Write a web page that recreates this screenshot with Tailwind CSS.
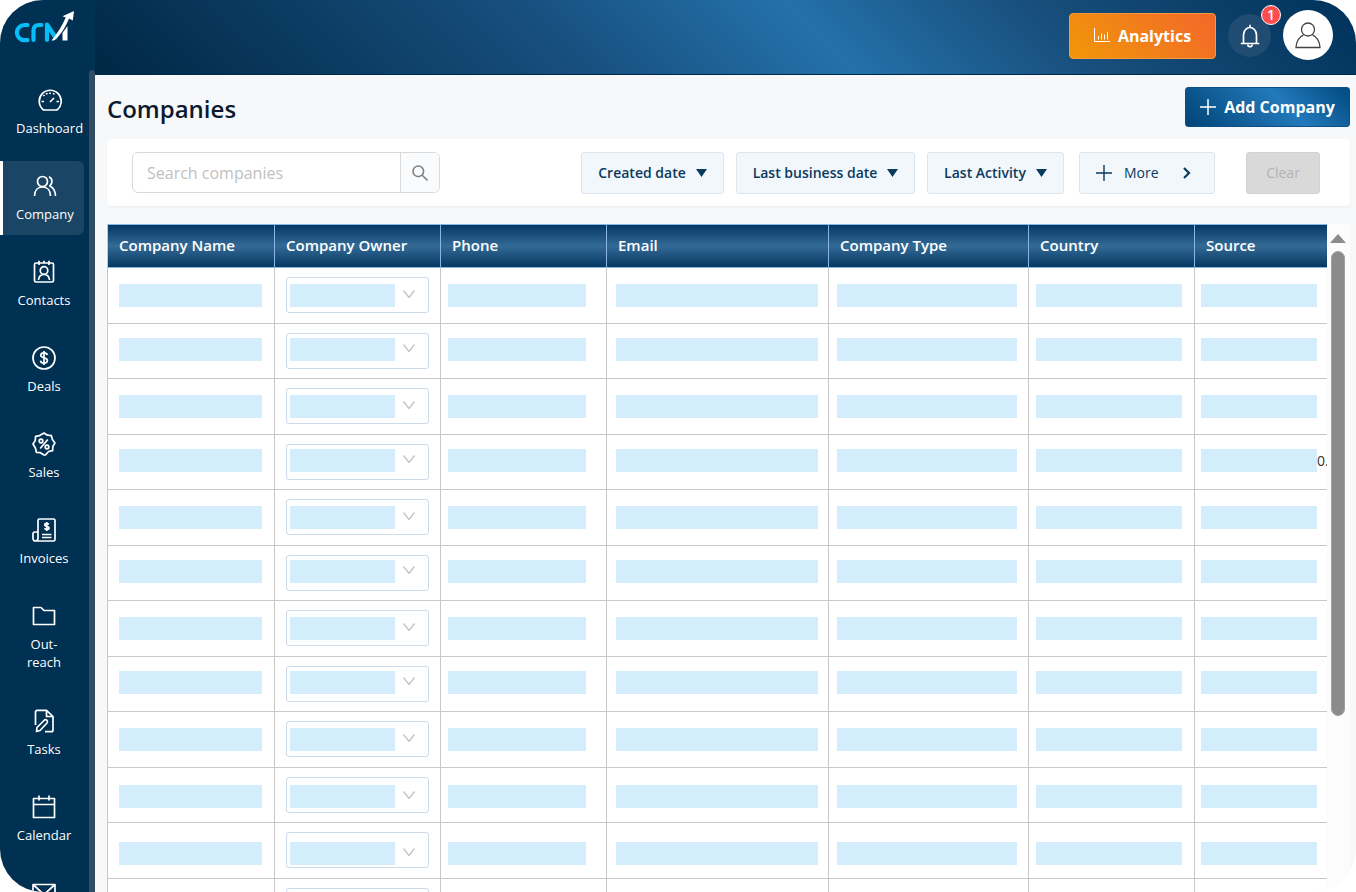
<!DOCTYPE html>
<html lang="en">
<head>
    <meta charset="UTF-8">
    <meta name="viewport" content="width=device-width, initial-scale=1.0">
    <title>CRM - Companies</title>
    <script src="https://cdn.jsdelivr.net/npm/@tailwindcss/browser@4"></script>
</head>
<body class="bg-white font-['Open_Sans','Noto_Sans',sans-serif]">
<div class="flex h-screen overflow-hidden rounded-[43px] bg-[#f7f8fa]">

    <!-- Sidebar -->
    <aside class="flex w-[95px] shrink-0 flex-col bg-[#003052]">
        <a href="#" aria-label="CRM home" class="block h-[70px] shrink-0 pt-2 pl-3">
            <svg class="h-9 w-16" viewBox="0 0 64 36" fill="none">
                <g stroke="#06bdf8" stroke-width="4.200" stroke-linecap="round" stroke-linejoin="round">
                    <path d="M15.500 17h-3a7.600 7.600 0 0 0 0 15.200h3"/>
                    <path d="M21.500 32V22.500c0-3.500 2-5.500 5.500-5.500h2.500"/>
                    <path d="M35 32V16.500l8.500 13"/>
                </g>
                <path d="M42 32.500 C49 27 53.500 19 57 10.500l3.800 2L62 3l-11.500 5.300 3.200 1.200C50 18 45.500 25 39.500 32.500z" fill="#fff"/>
                <path d="M55.500 18v14.500h-5V25z" fill="#fff"/>
            </svg>
        </a>
        <div class="flex min-h-0 flex-1 overflow-hidden">
            <nav id="nav" class="flex w-[84px] flex-col gap-3 pt-[5px] text-center text-[13px] leading-[18px] font-medium text-white"></nav>
            <div class="ml-auto w-[6px] shrink-0 rounded-t-full bg-[#304c63]"></div>
        </div>
    </aside>

    <div class="flex min-w-0 flex-1 flex-col">
        <!-- Top bar -->
        <header class="flex h-[75px] shrink-0 items-start justify-end gap-3 border-b border-[#002a4c] bg-[linear-gradient(45deg,#002744_0%,#174f7e_37%,#2471aa_57%,#184f7c_75%,#00325a_100%)] pt-[10px] pr-[23px]">
            <button type="button" class="mt-[3px] flex h-[46px] w-[147px] items-center justify-center gap-2 rounded border border-[#f79a3c] bg-[linear-gradient(45deg,#f09708,#f3672a)] text-base font-bold text-white">
                <svg class="size-4" viewBox="0 0 16 16" fill="none" stroke="currentColor" stroke-width="1"><path d="M.5 0v13.500h15.500M4.500 11.500V8M7.500 11.500V5.500M10.500 11.500V6.500M13.500 11.500V4"/></svg>
                Analytics
            </button>
            <button type="button" aria-label="Notifications" class="relative mt-1 flex size-[43px] items-center justify-center rounded-full bg-[#204c71] text-white">
                <svg class="h-6 w-5" viewBox="0 0 20 24" fill="none" stroke="currentColor" stroke-width="1.700"><path d="M3.500 19.500V11a6.500 7.500 0 0 1 13 0v8.500M.8 19.500h18.400M10 3.500V.8"/><path d="M7.800 20.500a2.200 2.200 0 0 0 4.400 0"/></svg>
                <span class="absolute -top-[9px] -right-[10px] flex size-5 items-center justify-center rounded-full border border-white bg-[#ff4d4f] text-sm font-semibold">1</span>
            </button>
            <button type="button" aria-label="Account" class="flex size-[50px] items-center justify-center rounded-full bg-white text-[#444]">
                <svg class="h-[27px] w-[26px]" viewBox="0 0 26 27" fill="none" stroke="currentColor" stroke-width="1.300"><circle cx="13" cy="7.500" r="6.500"/><path d="M8.500 12.800C4 15 1.300 19.500 1 25.500h24c-.3-6-3-10.500-7.500-12.700"/></svg>
            </button>
        </header>

        <main class="flex min-h-0 flex-1 flex-col pt-3 pr-[6px] pl-3">
            <div class="flex h-10 shrink-0 items-center justify-between">
                <h1 class="pt-1 text-2xl font-semibold text-[#0c1a30]">Companies</h1>
                <button type="button" class="flex h-10 w-[165px] items-center justify-center gap-2 rounded-[3px] border border-[#0b4f86] bg-[linear-gradient(45deg,#004477_0%,#2379ba_60%,#004a80_100%)] text-base font-bold text-white">
                    <svg class="size-4" viewBox="0 0 16 16" stroke="currentColor" stroke-width="1.500"><path d="M8 0v16M0 8h16"/></svg>
                    Add Company
                </button>
            </div>

            <!-- Filters -->
            <div class="mt-3 flex h-[67px] shrink-0 items-center rounded bg-white pr-[30px] pl-[25px] text-sm font-medium text-[#0b3a5f] shadow-xs">
                <form class="mr-auto flex h-[41px] w-[308px] overflow-hidden rounded-md border border-[#d9d9d9]">
                    <input type="text" aria-label="Search companies" placeholder="Search companies" class="min-w-0 flex-1 px-[14px] text-base font-normal outline-none placeholder:text-[#bfbfbf]">
                    <button type="button" aria-label="Search" class="flex w-[39px] items-center justify-center border-l border-[#d9d9d9] bg-[#fafbfc] text-[#808080]">
                        <svg class="size-4" viewBox="0 0 16 16" fill="none" stroke="currentColor" stroke-width="1.600"><circle cx="6.300" cy="6.300" r="5.300"/><path d="m10.200 10.200 5.300 5.300"/></svg>
                    </button>
                </form>
                <div class="flex gap-3">
                    <button type="button" class="flex h-[42px] w-[143px] items-center justify-center gap-[10px] rounded-[3px] border border-[#dde6ee] bg-[#f2f7fc] font-semibold">Created date
                        <svg class="h-2 w-[11px]" viewBox="0 0 11 8" fill="currentColor"><path d="M0 0h11L5.500 8z"/></svg></button>
                    <button type="button" class="flex h-[42px] w-[179px] items-center justify-center gap-[10px] rounded-[3px] border border-[#dde6ee] bg-[#f2f7fc] font-semibold">Last business date
                        <svg class="h-2 w-[11px]" viewBox="0 0 11 8" fill="currentColor"><path d="M0 0h11L5.500 8z"/></svg></button>
                    <button type="button" class="flex h-[42px] w-[137px] items-center justify-center gap-[10px] rounded-[3px] border border-[#dde6ee] bg-[#f2f7fc] font-semibold">Last Activity
                        <svg class="h-2 w-[11px]" viewBox="0 0 11 8" fill="currentColor"><path d="M0 0h11L5.500 8z"/></svg></button>
                </div>
                <button type="button" class="ml-[15px] flex h-[42px] w-[136px] items-center rounded-[3px] border border-[#dde6ee] bg-[#f2f7fc] px-4">
                    <svg class="mr-3 size-4" viewBox="0 0 16 16" stroke="currentColor" stroke-width="1.400"><path d="M8 0v16M0 8h16"/></svg>
                    More
                    <svg class="mr-[6px] ml-auto h-3 w-[10px]" viewBox="0 0 10 12" fill="none" stroke="currentColor" stroke-width="2.200"><path d="m2 1 5 5-5 5"/></svg>
                </button>
                <button type="button" disabled class="ml-[31px] h-[42px] w-[74px] rounded-[3px] border border-[#d2d2d2] bg-[#d9d9d9] font-medium text-[#b3b3b3]">Clear</button>
            </div>

            <!-- Companies table -->
            <div class="mt-[18px] flex min-h-0 flex-1 bg-white">
                <div class="min-w-0 flex-1 overflow-hidden">
                    <table class="w-[1255px] table-fixed border-separate border-spacing-0 border-l border-[#c8c8c8]">
                        <colgroup>
                            <col class="w-[167px]"><col class="w-[166px]"><col class="w-[166px]"><col class="w-[222px]"><col class="w-[200px]"><col class="w-[166px]"><col class="w-[167px]">
                        </colgroup>
                        <thead>
                            <tr id="head" class="h-11 text-left text-[15px] text-white"></tr>
                        </thead>
                        <tbody id="rows"></tbody>
                    </table>
                </div>
                <div class="flex w-[23px] shrink-0 flex-col items-center gap-2 bg-[#fcfcfc] pt-[10px] pr-px">
                    <svg class="h-[9px] w-4 shrink-0 text-[#8b8b8b]" viewBox="0 0 16 9" fill="currentColor"><path d="M8 0l8 9H0z"/></svg>
                    <div class="h-[465px] w-[14px] shrink-0 rounded-full border border-[#a0a0a0] bg-[#8b8b8b]"></div>
                </div>
            </div>
        </main>
    </div>
</div>

<script>
    const navItems = [
        ['Dashboard', '<path d="M5 21.500a11 11 0 1 1 14.500 0q-.6.500-1.500.500H6.500q-.9 0-1.500-.500z"/><path d="m12 14 4-4M12 4.500V6M5.500 7l1 1M3.500 13.500H6M18.500 13.500H21M8.500 5l.5 1.500M16 5l-.5 1.500"/>'],
        ['Company', '<circle cx="9.500" cy="7.500" r="5"/><path d="M1.500 22c0-5.500 3-9 8-9s8 3.500 8 9M16 2.800c3.800 2 3.800 6.500.8 9.200 3.700 1.800 5.700 5.500 5.700 10"/>'],
        ['Contacts', '<rect x="2.500" y="3" width="19" height="19" rx="1.500"/><path d="M7 .8V5M17 .8V5M12 .8V3"/><circle cx="12" cy="10.500" r="3.800"/><path d="M6.500 20c.3-3.500 2-5.500 5.500-5.500s5.200 2 5.500 5.500"/>'],
        ['Deals', '<circle cx="12" cy="12" r="11"/><path d="M15.300 9c-.3-1.500-1.500-2.200-3.300-2.200-2 0-3.200 1-3.200 2.500 0 3.600 6.600 1.600 6.600 5.300 0 1.600-1.300 2.600-3.400 2.600-2 0-3.300-.9-3.500-2.500M12 5v14"/>'],
        ['Sales', '<path d="m12 1 3.400 2.200 4 .4 1 4 2.500 3.400-2 3.400-.3 4.200-4 .9L13.500 22.800 12 23l-3.600-2.300-4-.4-.9-4L1 12l2.200-3.400.4-4.200 4-.8z"/><circle cx="9" cy="9" r="1.800"/><circle cx="15" cy="15" r="1.800"/><path d="m15.800 7.500-7.600 9"/>'],
        ['Invoices', '<path d="M6 20V2.500C6 1.500 6.500 1 7.500 1H21.500c1 0 1.500.5 1.500 1.500v19c0 1-.5 1.500-1.500 1.500H3.500C2 23 1 22 1 20.500V16c0-1.500.8-2 2-2h3v6c0 2-1 3-2.500 3"/><path d="M10 16.500h9.500M10 19.500h9.500"/><path d="M16.800 6.500c-.4-.8-1-1.100-2-1.100-1.300 0-2 .6-2 1.500 0 2 4.200 1 4.200 3 0 1-.8 1.600-2.200 1.600-1.100 0-1.900-.4-2.200-1.300M14.800 4v9"/>'],
        ['Out-<br>reach', '<path d="M1.500 20.500v-17h7.500l3 3h10.500v14z"/>'],
        ['Tasks', '<path d="M3.500 16V3C3.500 2 4.200 1.300 5.200 1.300H14.500L21 7.500V21c0 1-.6 1.700-1.600 1.700H13M14.500 1.500v6H21"/><path d="M4.500 22.500l.5-4L12.500 11c1.500-1 4 1 2.500 3L8 21.500z"/>'],
        ['Calendar', '<path d="M1.500 3.500h21v19h-21zM1.500 9.500h21M7 .5v5M17 .5v5"/>'],
        ['', '<path d="M1 3.500h22v17H1zM1 3.500l11 10 11-10"/>']
    ];

    document.getElementById('nav').innerHTML = navItems.map(([label, icon]) => `
        <a href="#" ${label ? '' : 'aria-label="Mail"'} class="block shrink-0 pt-[13px] pr-3 pl-4 ${label.includes('<br>') ? 'pb-[13px]' : 'pb-3'} ${label === 'Company' ? 'rounded-r-md border-l-3 border-white bg-[#1b4564] pl-[13px]' : ''}">
            <span class="flex w-max min-w-full flex-col items-center gap-[7px]">
                <svg class="size-6 shrink-0" viewBox="0 0 24 24" fill="none" stroke="currentColor" stroke-width="1.700" stroke-linejoin="round">${icon}</svg>
                <span>${label}</span>
            </span>
        </a>`).join('');

    const columns = ['Company Name', 'Company Owner', 'Phone', 'Email', 'Company Type', 'Country', 'Source'];
    document.getElementById('head').innerHTML = columns.map(name =>
        `<th class="border-y border-r border-[#8ab4e6] bg-linear-to-b from-[#033963] via-[#336a96] to-[#033963] px-[11px] pb-[2px] font-semibold">${name}</th>`).join('');

    // cell padding per column, the owner column holds a drop-down instead
    const cellPadding = ['pl-[11px] pr-[12px]', '', 'pl-[7px] pr-[20px]', 'pl-[9px] pr-[10px]', 'pl-[8px] pr-[11px]', 'pl-[7px] pr-[12px]', 'pl-[6px] pr-[44px]'];
    const bar = '<div class="h-[23px] bg-[#d4edfd]"></div>';

    const ownerCell = (pad) => `
        <td class="relative border-r border-b border-[#c8c8c8] px-[11px] pt-[9px] align-top">
            <select aria-label="Company owner" class="block h-9 w-full appearance-none rounded-[3px] border border-[#cddae8] bg-white"><option></option></select>
            <div class="pointer-events-none absolute inset-0 flex items-start pl-[15px] ${pad}">
                <div class="h-[23px] w-[105px] bg-[#d4edfd]"></div>
                <svg class="mt-[6px] ml-2 h-2 w-3" viewBox="0 0 12 8" fill="none" stroke="#c4c4c4" stroke-width="1.400"><path d="m.5.500 5.500 7 5.500-7"/></svg>
            </div>
        </td>`;

    const rowPadding = ['pt-4', 'pt-[14px]', 'pt-4', 'pt-[14px]', 'pt-4', 'pt-[14px]', 'pt-4', 'pt-[14px]', 'pt-4', 'pt-[17px]', 'pt-[19px]', 'pt-5'];
    document.getElementById('rows').innerHTML = rowPadding.map((pad, r) => `
        <tr class="${r % 2 ? 'h-[55px]' : 'h-14'}">` + cellPadding.map((cell, c) => {
            if (c === 1) return ownerCell(pad);
            if (c === 6 && r === 3) return `<td class="border-b border-[#c8c8c8] pl-[6px] align-top ${pad}"><div class="flex items-center"><div class="h-[23px] w-[116px] bg-[#d4edfd]"></div><span class="text-sm leading-5 text-[#333]">0.</span></div></td>`;
            return `<td class="border-r border-b border-[#c8c8c8] align-top ${cell} ${pad}">${bar}</td>`;
        }).join('') + '</tr>').join('');
</script>
</body>
</html>
